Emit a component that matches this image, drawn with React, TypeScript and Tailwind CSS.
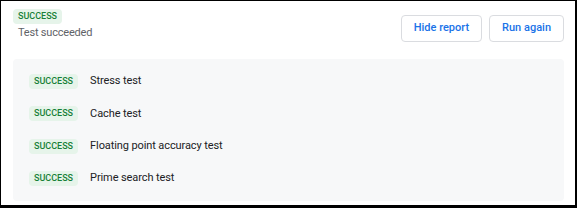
import React from "react";

const Badge = () => (
  <span className="inline-flex items-center rounded-[4px] bg-[#e6f4ea] px-[5px] h-[15px] text-[9px] font-medium text-[#188038] leading-none">
    SUCCESS
  </span>
);

const tests = ["Stress test", "Cache test", "Floating point accuracy test", "Prime search test"];

export default function App() {
  return (
    <div className="w-[577px] h-[208px] bg-black pt-px pl-px pr-[2px] pb-[3px]" style={{ fontFamily: "Roboto, 'Noto Sans', sans-serif" }}>
      <div className="h-full bg-white px-[12px] pt-[8px]">
        <div className="flex items-start justify-between">
          <div className="flex flex-col items-start">
            <Badge />
            <div className="mt-[1px] pl-[5px] text-[11px] tracking-[-0.2px] leading-[16px] text-[#5f6368]">Test succeeded</div>
          </div>
          <div className="flex gap-[7px] mt-[6px] mr-[-1px]">
            <button className="h-[27px] px-[12px] rounded-[4px] border border-[#dadce0] bg-white text-[11px] font-medium text-[#1a73e8]">
              Hide report
            </button>
            <button className="h-[27px] px-[12px] rounded-[4px] border border-[#dadce0] bg-white text-[11px] font-medium text-[#1a73e8]">
              Run again
            </button>
          </div>
        </div>
        <div className="mt-[17px] mr-[-1px] h-[142px] rounded-[4px] bg-[#f7f8f9] pl-[16px] pt-[15px] flex flex-col gap-[17.3px]">
          {tests.map((t) => (
            <div key={t} className="flex items-center gap-[12px] h-[15px]">
              <Badge />
              <span className="text-[11px] tracking-[-0.1px] text-[#202124]">{t}</span>
            </div>
          ))}
        </div>
      </div>
    </div>
  );
}
